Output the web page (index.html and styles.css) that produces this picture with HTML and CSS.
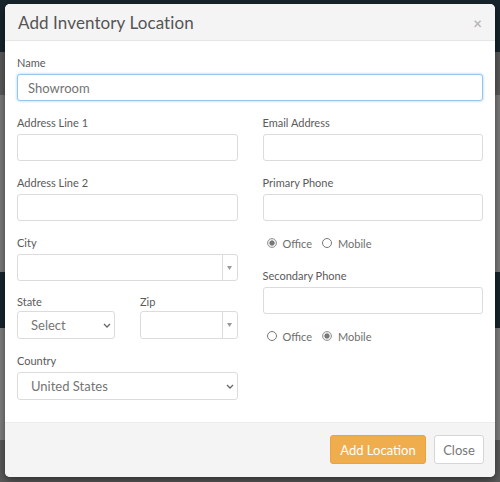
FILE: index.html
```html
<!DOCTYPE html>
<html lang="en">
<head>
<meta charset="utf-8">
<title>Add Inventory Location</title>
<link rel="stylesheet" href="styles.css">
</head>
<body>
<div class="modal">
  <div class="modal-header">
    <h4 class="modal-title">Add Inventory Location</h4>
    <span class="close-x">&times;</span>
  </div>
  <div class="modal-body">
    <div class="field">
      <label class="lbl">Name</label>
      <input class="ctl ctl-focus" type="text" value="Showroom">
    </div>
    <div class="cols">
      <div class="col">
        <div class="field">
          <label class="lbl">Address Line 1</label>
          <input class="ctl" type="text">
        </div>
        <div class="field">
          <label class="lbl">Address Line 2</label>
          <input class="ctl" type="text">
        </div>
        <div class="field">
          <label class="lbl">City</label>
          <div class="combo">
            <input class="combo-input" type="text">
            <span class="combo-btn"><svg width="5" height="4" viewBox="0 0 5 4"><path d="M0 0 H5 L2.5 4 Z" fill="#999"/></svg></span>
          </div>
        </div>
        <div class="state-row">
          <div class="field state">
            <label class="lbl lbl-tight">State</label>
            <div class="sel-wrap">
              <select class="sel"><option>Select</option></select>
              <svg class="chev" width="8" height="5" viewBox="0 0 8 5"><path d="M1 1 L4 4 L7 1" fill="none" stroke="#666" stroke-width="1.3"/></svg>
            </div>
          </div>
          <div class="field zip">
            <label class="lbl lbl-tight">Zip</label>
            <div class="combo combo-tall">
              <input class="combo-input" type="text">
              <span class="combo-btn"><svg width="5" height="4" viewBox="0 0 5 4"><path d="M0 0 H5 L2.5 4 Z" fill="#999"/></svg></span>
            </div>
          </div>
        </div>
        <div class="field">
          <label class="lbl">Country</label>
          <div class="sel-wrap">
            <select class="sel"><option>United States</option></select>
            <svg class="chev" width="8" height="5" viewBox="0 0 8 5"><path d="M1 1 L4 4 L7 1" fill="none" stroke="#666" stroke-width="1.3"/></svg>
          </div>
        </div>
      </div>
      <div class="col">
        <div class="field">
          <label class="lbl">Email Address</label>
          <input class="ctl" type="text">
        </div>
        <div class="field">
          <label class="lbl">Primary Phone</label>
          <input class="ctl" type="text">
        </div>
        <div class="radios">
          <label class="rad"><input type="radio" name="p1" checked> Office</label>
          <label class="rad"><input type="radio" name="p1"> Mobile</label>
        </div>
        <div class="field">
          <label class="lbl">Secondary Phone</label>
          <input class="ctl" type="text">
        </div>
        <div class="radios radios-last">
          <label class="rad"><input type="radio" name="p2"> Office</label>
          <label class="rad"><input type="radio" name="p2" checked> Mobile</label>
        </div>
      </div>
    </div>
  </div>
  <div class="modal-footer">
    <button class="btn btn-warning" type="button">Add Location</button>
    <button class="btn btn-default" type="button">Close</button>
  </div>
</div>
</body>
</html>
```

FILE: styles.css
```css
* { box-sizing: border-box; }

html, body {
  margin: 0;
  height: 100%;
}

body {
  font-family: "Lato", "Open Sans", sans-serif;
  color: #5a5a5a;
  background: linear-gradient(to bottom,
    #17252c 0, #17252c 52px,
    #5b5b5b 52px, #5b5b5b 95px,
    #7c7c7c 95px, #7c7c7c 272px,
    #17252c 272px, #17252c 328px,
    #808080 328px, #808080 440px,
    #5a5a5a 440px);
  padding: 4px 5px 0 5px;
}

.modal {
  width: 490px;
  height: 473px;
  background: #fff;
  border-radius: 5px;
  overflow: hidden;
  display: flex;
  flex-direction: column;
  box-shadow: 0 3px 9px rgba(0, 0, 0, 0.5);
}

.modal-header {
  height: 37px;
  flex: none;
  background: #f4f4f4;
  border-bottom: 1px solid #e6e6e6;
  display: flex;
  align-items: center;
  justify-content: space-between;
  padding: 0 13px 0 13px;
}

.modal-title {
  margin: 0;
  font-size: 17px;
  font-weight: 400;
  color: #555;
  letter-spacing: 0.1px;
}

.close-x {
  font-size: 15px;
  font-weight: 700;
  color: #b8b8b8;
  line-height: 1;
  margin-top: 2px;
}

.modal-body {
  flex: 1;
  padding: 15px 12px 0 12px;
}

.field {
  display: flex;
  flex-direction: column;
  margin-bottom: 15px;
  min-width: 0;
}

.lbl {
  font-size: 11px;
  line-height: 13px;
  color: #5a5a5a;
  margin-bottom: 5px;
}

.lbl-tight { margin-bottom: 3px; }

.ctl {
  height: 27px;
  width: 100%;
  min-width: 0;
  border: 1px solid #dcdcdc;
  border-radius: 3px;
  font-family: inherit;
  font-size: 13px;
  color: #737373;
  padding: 0 10px;
  background: #fff;
  outline: none;
}

.ctl-focus {
  border-color: #94c6ee;
  box-shadow: 0 0 3px rgba(102, 175, 233, 0.6);
}

.cols {
  display: grid;
  grid-template-columns: minmax(0, 1fr) minmax(0, 1fr);
  column-gap: 25px;
}

.col {
  display: flex;
  flex-direction: column;
  min-width: 0;
}

.combo {
  display: flex;
  height: 27px;
  border: 1px solid #dcdcdc;
  border-radius: 3px;
  background: #fff;
}

.combo-tall { height: 28px; }

.combo-input {
  flex: 1;
  min-width: 0;
  width: 0;
  border: none;
  outline: none;
  background: transparent;
  font-family: inherit;
  font-size: 13px;
}

.combo-btn {
  width: 15px;
  flex: none;
  border-left: 1px solid #dcdcdc;
  display: flex;
  align-items: center;
  justify-content: center;
}

.state-row {
  display: flex;
  column-gap: 25px;
  margin-top: -1px;
}

.state { width: 98px; flex: none; }
.zip { flex: 1; }

.sel-wrap {
  position: relative;
}

.sel {
  -webkit-appearance: none;
  appearance: none;
  width: 100%;
  height: 28px;
  border: 1px solid #dcdcdc;
  border-radius: 3px;
  background: #fff;
  font-family: inherit;
  font-size: 13px;
  color: #757575;
  padding: 0 13px;
  outline: none;
}

.chev {
  position: absolute;
  right: 4px;
  top: 12px;
}

.radios {
  display: flex;
  align-items: center;
  height: 16px;
  margin-top: -1px;
  margin-bottom: 18px;
  padding-left: 4px;
  column-gap: 10px;
}

.rad {
  display: flex;
  align-items: center;
  font-size: 11px;
  color: #6e6e6e;
  column-gap: 6px;
}

.rad input {
  -webkit-appearance: none;
  appearance: none;
  margin: 0;
  width: 10px;
  height: 10px;
  border: 1px solid #777;
  border-radius: 50%;
  background: #fff;
}

.rad input:checked {
  border-color: #999;
  background: radial-gradient(circle, #777 0, #777 2.3px, #e6e6e6 2.8px);
}

.modal-footer {
  height: 55px;
  flex: none;
  background: #f4f4f4;
  border-top: 1px solid #ececec;
  display: flex;
  justify-content: flex-end;
  align-items: flex-start;
  padding: 12px 11px 0 0;
  column-gap: 8px;
}

.btn {
  height: 29px;
  border-radius: 3px;
  font-family: inherit;
  font-size: 13px;
  padding: 0;
  white-space: nowrap;
  cursor: pointer;
}

.btn-warning {
  width: 96px;
  background: #f0ad4e;
  border: 1px solid #eea23b;
  color: #fff;
}

.btn-default {
  width: 50px;
  background: #fff;
  border: 1px solid #d6d6d6;
  color: #777;
}
```
